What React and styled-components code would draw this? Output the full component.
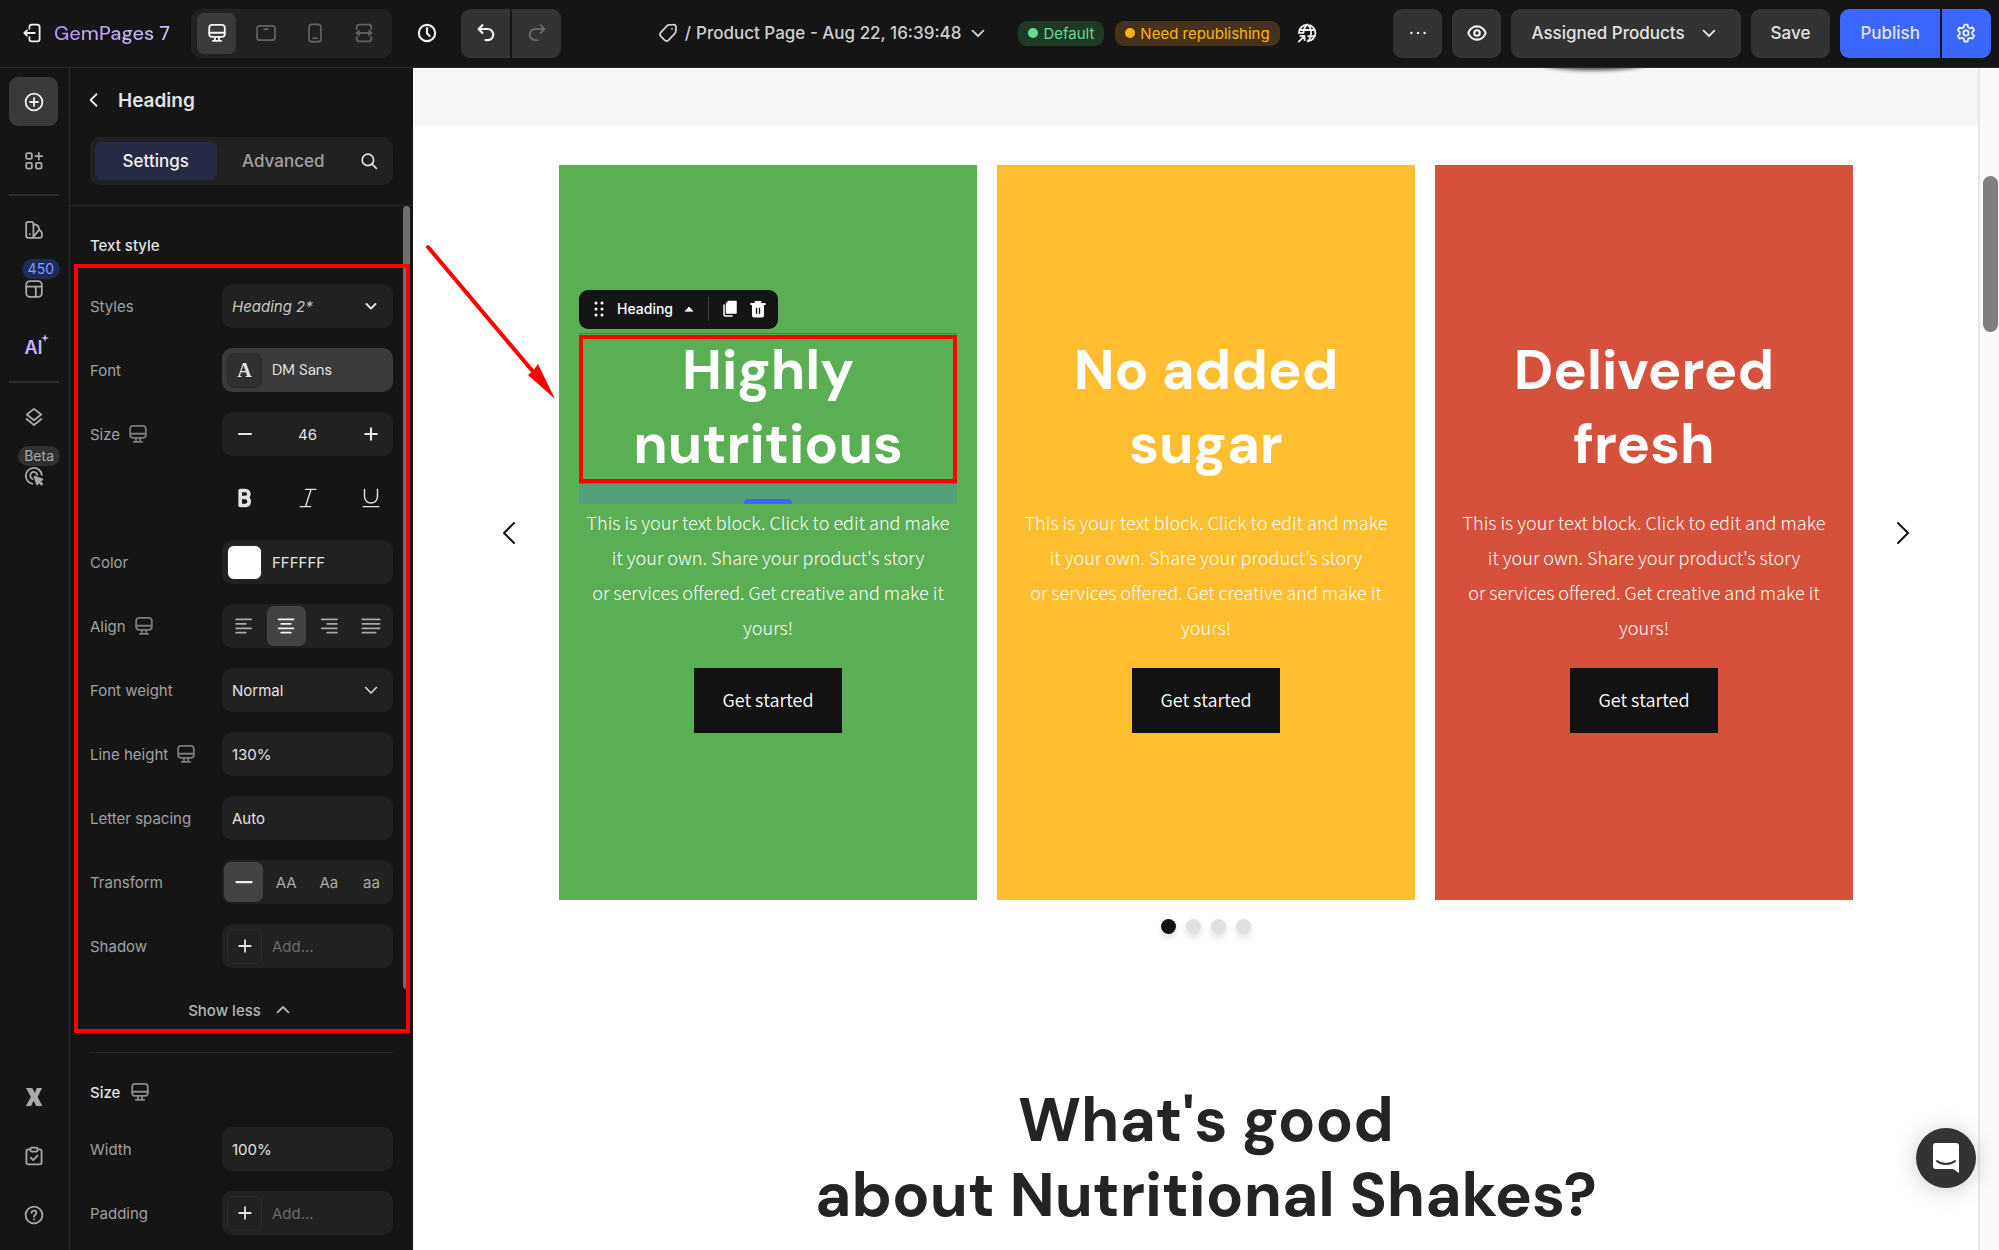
import styled, { createGlobalStyle, css } from 'styled-components';
import { useState } from 'react';

const glyphs = {
  exit: <><path d="M7 6.500V5a2 2 0 0 1 2-2h4.500a2 2 0 0 1 2 2v10a2 2 0 0 1-2 2H9a2 2 0 0 1-2-2v-1.500" /><path d="M11.500 10H2.800M5 7.800 2.800 10 5 12.200" /></>,
  desktop: <><rect x="3.500" y="3.200" width="13" height="10" rx="2.400" /><path d="M3.500 9.800h13M8.300 13.500V16M11.700 13.500V16M6.500 16.500h7" /></>,
  tablet: <><rect x="2.500" y="4" width="15" height="12" rx="2.500" /><path d="M8.500 6.800h3" /></>,
  mobile: <><rect x="5" y="2.800" width="10" height="14.500" rx="2.500" /><path d="M8.500 14.300h3" /></>,
  fluid: <><path d="M4 6.800V5a2 2 0 0 1 2-2h8a2 2 0 0 1 2 2v1.800M4 13.200V15a2 2 0 0 0 2 2h8a2 2 0 0 0 2-2v-1.800" /><path d="M4 10h12M6 8l-2.200 2L6 12M14 8l2.200 2L14 12" /></>,
  clock: <><circle cx="10" cy="10" r="6.800" /><path d="M10 6v4.200l2.200 2.300" /></>,
  undo: <path d="M7 3.500 3.800 6.700 7 9.900M4 6.700h7.500a4.600 4.600 0 0 1 0 9.200H9.500" />,
  redo: <path d="m13 3.500 3.200 3.200L13 9.900M16 6.700H8.500a4.600 4.600 0 0 0 0 9.200h2" />,
  tag: <><path d="M10.600 3.300 14.500 3a2 2 0 0 1 2.200 2.100l-.3 4a2 2 0 0 1-.6 1.200l-5.500 5.800a2 2 0 0 1-2.900 0l-3.500-3.500a2 2 0 0 1 0-2.900l5.400-5.800a2 2 0 0 1 1.300-.6Z" /><path d="M13.300 6.600h.01" /></>,
  down: <path d="m5.500 8 4.500 4.500L14.500 8" />,
  up: <path d="m5.500 12 4.500-4.500 4.500 4.500" />,
  left: <path d="M12 5.200 7.200 10l4.800 4.800" />,
  globe: <><path d="M3.200 9.800a6.900 6.900 0 1 1 7.300 7.100c2-1.600 2.900-4 2.900-7s-1-5.300-3-7c-2.200 1.800-3.200 4-3.300 6.900" /><path d="M3.900 7.500h12.500M3.300 9.900h3M11 12.700h5.300" /><path d="M3.200 17.200 7.800 12.600M4.400 12.400H8V16" /></>,
  dots: <path strokeWidth="2" d="M4.500 10h.01M10 10h.01M15.500 10h.01" />,
  eye: <><path d="M2.800 10c1-3 3.800-5.500 7.200-5.500s6.200 2.500 7.200 5.500c-1 3-3.800 5.500-7.200 5.500S3.800 13 2.800 10Z" /><circle cx="10" cy="10" r="2.300" /></>,
  gear: <><path d="M8.700 3h2.600l.5 2.200 1.500.9 2.200-.7 1.300 2.300-1.600 1.500v1.700l1.600 1.500-1.300 2.300-2.200-.7-1.500.9-.5 2.200H8.700l-.5-2.200-1.500-.9-2.200.7-1.300-2.300 1.600-1.500V9.200L3.200 7.700l1.300-2.300 2.200.7 1.500-.9Z" /><circle cx="10" cy="10" r="2.200" /></>,
  plusCircle: <><circle cx="10" cy="10" r="7" /><path d="M10 6.700v6.600M6.700 10h6.600" /></>,
  apps: <><rect x="3.500" y="3.500" width="4.700" height="4.700" rx="1" /><rect x="3.500" y="11.600" width="4.700" height="4.700" rx="1" /><rect x="11.600" y="11.600" width="4.700" height="4.700" rx="1" /><path d="M14 3.200v5.600M11.200 6h5.600" /></>,
  swatch: <><path d="M3.500 4.800a1.500 1.500 0 0 1 1.500-1.500h3A1.500 1.500 0 0 1 9.500 4.800v10.200a1.500 1.500 0 0 1-1.500 1.500H5A1.500 1.500 0 0 1 3.500 15ZM9.500 5.200c3 .1 4.600 1.800 4.800 4.300M9 16.300l5.400-6.600 1.600 1.700c.5.600.6 1.200.6 1.900v1.700a1.500 1.500 0 0 1-1.500 1.500H8" /><path d="M6.500 13.500h.01" /></>,
  layout: <><rect x="3.500" y="3.500" width="13" height="13" rx="3" /><path d="M3.500 8h13M11.500 8v8.500" /></>,
  layers: <><path d="m10 3.200 6 4.700-6 4.800-6-4.800Z" /><path d="m3.800 11.700 6.200 5 6.200-5" /></>,
  target: <><path d="M8.600 16.500A6.700 6.700 0 1 1 16.500 9M9 12.500a3 3 0 1 1 3.800-3.600" /><path fill="currentColor" d="m10.500 10.500 6.500 2.300-2.500 1.400 2.300 2.300-.6.600-2.400-2.300-1.200 2.300Z" /></>,
  clipboard: <><path d="M7 4.500H5A1.300 1.300 0 0 0 3.700 5.800v9.900A1.300 1.300 0 0 0 5 17h10a1.300 1.300 0 0 0 1.300-1.300V5.800A1.300 1.300 0 0 0 15 4.500h-2" /><rect x="7" y="3" width="6" height="3.300" rx="1.200" /><path d="m7.300 11.400 2 2 3.600-3.800" /></>,
  help: <><circle cx="10" cy="10" r="7" /><path d="M8 8.200C8 5.700 12 5.800 12 8.200c0 1.600-2 1.600-2 3.200M10 13.700h.01" /></>,
  brandX: <path fill="currentColor" stroke="none" d="M3.300 2.500h5.200l2.300 4.200 1.400-4.200h4.500L13 10l4 7.500h-5.200l-2.200-4.300-2 4.300H3.200L7.400 10Zm7.600 6 1.600-4h.6l-1.600 4.200Z" />,
  search: <><circle cx="9" cy="9" r="5.200" /><path d="m13 13 3.700 3.700" /></>,
  minus: <path d="M5 10h10" />,
  plus: <path d="M10 5.200v9.600M5.200 10h9.600" />,
  bold: <path strokeWidth="2.800" d="M6.300 4.200v11.600h4.500a3.200 3.200 0 0 0 0-6.200H6.300M6.300 4.200h4a2.700 2.700 0 0 1 0 5.400" />,
  italic: <path d="M8 2.800h8.500M3.500 17.200H12M12.500 3 8 17" />,
  underline: <path d="M4.600 2.800v6a5.400 5.400 0 0 0 10.800 0v-6M3.500 17.200h13" />,
  alignLeft: <path d="M3.500 4.500h12.500M3.500 8.200h8M3.500 11.900h12.500M3.500 15.600h8" />,
  alignCenter: <path d="M3.800 4.500h12.400M6 8.200h8M3.800 11.900h12.400M6 15.600h8" />,
  alignRight: <path d="M4 4.500h12.500M8.500 8.200h8M4 11.900h12.500M8.500 15.600h8" />,
  justify: <path d="M2.800 4.500h14.400M2.800 8.200h14.400M2.800 11.900h14.400M2.800 15.600h11" />,
  grip: <path strokeWidth="3" d="M7 4h.01M13 4h.01M7 10h.01M13 10h.01M7 16h.01M13 16h.01" />,
  caret: <path fill="currentColor" d="m5.500 12.500 4.500-5 4.500 5Z" />,
  copy: <><path fill="currentColor" d="M8.500 2.500h7.500V14H6.500V4.500Z" /><path d="M4 6v9.500A1.500 1.500 0 0 0 5.500 17H12" /></>,
  trash: <><path strokeWidth="1.800" d="M3 5h14M7.500 5V3h5v2" /><path fill="currentColor" stroke="none" fillRule="evenodd" d="M4 6h12v10.500a2 2 0 0 1-2 2H6a2 2 0 0 1-2-2Zm3.800 2.800v6h1.400v-6Zm3 0v6h1.400v-6Z" /></>,
};

function Icon({ name, size = 24, weight = 1.5 }) {
  return (
    <Svg width={size} height={size} viewBox="0 0 20 20" strokeWidth={weight} aria-hidden="true">
      {glyphs[name]}
    </Svg>
  );
}

const textBlock = [
  'This is your text block. Click to edit and make',
  "it your own. Share your product's story",
  'or services offered. Get creative and make it',
  'yours!',
];

const cards = [
  { title: ['Highly', 'nutritious'], color: '#5aae53', selected: true },
  { title: ['No added', 'sugar'], color: '#ffbe30' },
  { title: ['Delivered', 'fresh'], color: '#d5513b' },
];

function Header() {
  const [device, setDevice] = useState('desktop');
  return (
    <TopBar>
      <TopLeft>
        <PlainButton aria-label="Exit"><Icon name="exit" /></PlainButton>
        <Brand>GemPages 7</Brand>
        <Devices>
          {['desktop', 'tablet', 'mobile', 'fluid'].map((d) => (
            <Device key={d} aria-label={d} $active={d === device} onClick={() => setDevice(d)}>
              <Icon name={d} />
            </Device>
          ))}
        </Devices>
        <PlainButton aria-label="History"><Icon name="clock" weight={1.8} /></PlainButton>
        <Split>
          <BarButton aria-label="Undo" $first><Icon name="undo" weight={1.8} /></BarButton>
          <BarButton aria-label="Redo" $last $muted><Icon name="redo" /></BarButton>
        </Split>
      </TopLeft>
      <PageInfo>
        <PageName>
          <Icon name="tag" />
          <span>/</span>
          <span>Product Page - Aug 22, 16:39:48</span>
          <Icon name="down" size={24} />
        </PageName>
        <Status $bg="#1e3a26" $fg="#64dc92">Default</Status>
        <Status $bg="#453319" $fg="#ffb414">Need republishing</Status>
        <PlainButton aria-label="Language"><Icon name="globe" /></PlainButton>
      </PageInfo>
      <Actions>
        <BarButton aria-label="More"><Icon name="dots" /></BarButton>
        <BarButton aria-label="Preview"><Icon name="eye" weight={1.8} /></BarButton>
        <TextButton>Assigned Products <Icon name="down" size={24} /></TextButton>
        <TextButton>Save</TextButton>
        <Split>
          <TextButton $primary $first>Publish</TextButton>
          <BarButton $primary $last aria-label="Publish settings"><Icon name="gear" /></BarButton>
        </Split>
      </Actions>
    </TopBar>
  );
}

function Sidebar() {
  return (
    <Rail>
      <RailGroup>
        <RailButton $active aria-label="Add element"><Icon name="plusCircle" /></RailButton>
        <RailButton aria-label="Sections"><Icon name="apps" /></RailButton>
      </RailGroup>
      <RailLine />
      <RailGroup>
        <RailButton aria-label="Global style"><Icon name="swatch" /></RailButton>
        <RailButton aria-label="Templates"><Badge $blue>450</Badge><Icon name="layout" /></RailButton>
        <RailButton aria-label="AI">
          <AiMark>AI<svg width="8" height="8" viewBox="0 0 8 8"><path fill="#c9b2ff" d="M4 0 5 3 8 4 5 5 4 8 3 5 0 4 3 3Z" /></svg></AiMark>
        </RailButton>
      </RailGroup>
      <RailLine />
      <RailGroup>
        <RailButton aria-label="Layers"><Icon name="layers" /></RailButton>
        <RailButton aria-label="Interactions"><Badge>Beta</Badge><Icon name="target" /></RailButton>
      </RailGroup>
      <RailFooter>
        <RailButton aria-label="Apps"><Icon name="brandX" /></RailButton>
        <RailButton aria-label="Checklist"><Icon name="clipboard" /></RailButton>
        <RailButton aria-label="Help"><Icon name="help" /></RailButton>
      </RailFooter>
    </Rail>
  );
}

function Field({ label, id, device, children }) {
  return (
    <Row>
      <Label htmlFor={id}>{label}{device && <Icon name="desktop" />}</Label>
      {children}
    </Row>
  );
}

function Panel() {
  const [align, setAlign] = useState('alignCenter');
  const [transform, setTransform] = useState('none');
  return (
    <Side>
      <PanelHead>
        <PanelTitle>
          <PlainButton aria-label="Back"><Icon name="left" /></PlainButton>
          <h1>Heading</h1>
        </PanelTitle>
        <Tabs>
          <Tab $active>Settings</Tab>
          <Tab>Advanced</Tab>
          <SearchButton aria-label="Search"><Icon name="search" size={22} /></SearchButton>
        </Tabs>
      </PanelHead>
      <PanelBody>
        <ScrollThumb />
        <Section>
          <SectionTitle $gap={29}>Text style</SectionTitle>
          <Rows>
            <Field label="Styles" id="styles">
              <SelectBox>
                <Select id="styles" $italic><option>Heading 2*</option></Select>
                <Icon name="down" size={20} weight={2} />
              </SelectBox>
            </Field>
            <Field label="Font" id="font">
              <Control $active>
                <Chip $font>A</Chip>
                <TextInput id="font" defaultValue="DM Sans" $dm />
              </Control>
            </Field>
            <Field label="Size" id="size" device>
              <Control>
                <StepButton aria-label="Decrease"><Icon name="minus" size={24} weight={1.8} /></StepButton>
                <TextInput id="size" defaultValue="46" $center />
                <StepButton aria-label="Increase"><Icon name="plus" size={24} weight={1.8} /></StepButton>
              </Control>
            </Field>
            <FormatRow>
              <StepButton aria-label="Bold"><Icon name="bold" size={26} /></StepButton>
              <StepButton aria-label="Italic"><Icon name="italic" size={24} weight={1.2} /></StepButton>
              <StepButton aria-label="Underline"><Icon name="underline" size={24} weight={1.2} /></StepButton>
            </FormatRow>
            <Field label="Color" id="color">
              <Control>
                <Chip $swatch />
                <TextInput id="color" defaultValue="FFFFFF" />
              </Control>
            </Field>
            <Field label="Align" device>
              <Choices>
                {['alignLeft', 'alignCenter', 'alignRight', 'justify'].map((a) => (
                  <Choice key={a} aria-label={a} $active={a === align} onClick={() => setAlign(a)}>
                    <Icon name={a} size={24} />
                  </Choice>
                ))}
              </Choices>
            </Field>
            <Field label="Font weight" id="weight">
              <SelectBox>
                <Select id="weight"><option>Normal</option></Select>
                <Icon name="down" size={24} weight={1.2} />
              </SelectBox>
            </Field>
            <Field label="Line height" id="line-height" device>
              <Control><TextInput id="line-height" defaultValue="130%" /></Control>
            </Field>
            <Field label="Letter spacing" id="letter-spacing">
              <Control><TextInput id="letter-spacing" defaultValue="Auto" /></Control>
            </Field>
            <Field label="Transform">
              <Choices>
                {['none', 'AA', 'Aa', 'aa'].map((t) => (
                  <Choice key={t} $active={t === transform} onClick={() => setTransform(t)} aria-label={t}>
                    {t === 'none' ? <Icon name="minus" size={30} /> : t}
                  </Choice>
                ))}
              </Choices>
            </Field>
            <Field label="Shadow" id="shadow">
              <Control>
                <Chip><Icon name="plus" size={24} /></Chip>
                <TextInput id="shadow" placeholder="Add..." />
              </Control>
            </Field>
            <ShowLess>Show less <Icon name="up" size={24} /></ShowLess>
          </Rows>
          <PanelMark />
        </Section>
        <Divider />
        <Section>
          <SectionTitle $gap={25}>Size <Icon name="desktop" /></SectionTitle>
          <Rows>
            <Field label="Width" id="width">
              <Control><TextInput id="width" defaultValue="100%" /></Control>
            </Field>
            <Field label="Padding" id="padding">
              <Control>
                <Chip><Icon name="plus" size={24} /></Chip>
                <TextInput id="padding" placeholder="Add..." />
              </Control>
            </Field>
          </Rows>
        </Section>
      </PanelBody>
    </Side>
  );
}

function Canvas() {
  return (
    <Stage>
      <Band><Shade /></Band>
      <Carousel>
        <Arrow aria-label="Previous"><svg width="14" height="24" viewBox="0 0 14 24"><path d="M12 2 2 12l10 10" /></svg></Arrow>
        <Slides>
          {cards.map((card) => (
            <Card key={card.color} $color={card.color}>
              <CardTitle>
                {card.title[0]}<br />{card.title[1]}
                {card.selected && (
                  <>
                    <Selection />
                    <SpacingHandle />
                    <Toolbar>
                      <Icon name="grip" size={20} />
                      <span>Heading</span>
                      <Icon name="caret" size={16} weight={1} />
                      <i />
                      <Icon name="copy" size={20} />
                      <Icon name="trash" size={20} />
                    </Toolbar>
                  </>
                )}
              </CardTitle>
              <CardText>
                {textBlock.map((line) => <span key={line}>{line}</span>)}
              </CardText>
              <CardButton>Get started</CardButton>
            </Card>
          ))}
        </Slides>
        <Arrow aria-label="Next"><svg width="14" height="24" viewBox="0 0 14 24"><path d="m2 2 10 10L2 22" /></svg></Arrow>
      </Carousel>
      <Dots>
        <Dot $active aria-label="Slide 1" />
        <Dot aria-label="Slide 2" />
        <Dot aria-label="Slide 3" />
        <Dot aria-label="Slide 4" />
      </Dots>
      <BigTitle>What's good<br />about Nutritional Shakes?</BigTitle>
      <Track><Thumb /></Track>
      <Pointer width="136" height="160" viewBox="0 0 136 160">
        <path d="M5 5 112 132" stroke="#ff0000" strokeWidth="4" strokeLinecap="round" />
        <path d="m132 157-27-24 5-4 5-7Z" fill="#ff0000" />
      </Pointer>
      <Chat aria-label="Open chat">
        <svg width="28" height="32" viewBox="0 0 28 32">
          <path fill="#fff" d="M4 1h20a3 3 0 0 1 3 3v27l-6-4H4a3 3 0 0 1-3-3V4a3 3 0 0 1 3-3Z" />
          <path d="M5 19c5 4 13 4 18 0" fill="none" stroke="#333" strokeWidth="2" strokeLinecap="round" />
        </svg>
      </Chat>
    </Stage>
  );
}

function App() {
  return (
    <Shell>
      <GlobalStyle />
      <Header />
      <Workspace>
        <Sidebar />
        <Panel />
        <Canvas />
      </Workspace>
    </Shell>
  );
}

const GlobalStyle = createGlobalStyle`
 *{
  box-sizing:border-box;
 }

 body{
  margin:0;
  overflow:hidden;
 }

 button,input,select{
  font:inherit;
  color:inherit;
  border:none;
  background:none;
  padding:0;
  margin:0;
 }

 button{
  cursor:pointer;
 }
`;

const Svg = styled.svg`
 flex:none;
 fill:none;
 stroke:currentColor;
 stroke-linecap:round;
 stroke-linejoin:round;
`;

const Shell = styled.div`
 height:100vh;
 display:flex;
 flex-direction:column;
 background:#151515;
 color:#e3e3e3;
 font-family:Inter,"Liberation Sans",sans-serif;
 font-size:15px;
`;

const TopBar = styled.header`
 flex:none;
 height:68px;
 display:flex;
 align-items:center;
 justify-content:space-between;
 padding:0 8px 1px 21px;
 border-bottom:1px solid #2a2a2a;
`;

const TopLeft = styled.div`
 display:flex;
 align-items:center;
 padding-right:20px;
`;

const PlainButton = styled.button`
 display:flex;
 color:#f1f1f1;
`;

const Brand = styled.div`
 flex:none;
 width:146px;
 padding-left:9px;
 font-family:"DM Sans",Inter,sans-serif;
 font-size:20px;
 font-weight:500;
 white-space:nowrap;
 background:linear-gradient(90deg,#b48af0,#cfcaff);
 background-clip:text;
 color:transparent;
`;

const Devices = styled.div`
 display:flex;
 gap:10px;
 padding:4px 9px 4px 6px;
 margin-right:23px;
 border-radius:10px;
 background:#212121;
`;

const Device = styled.button`
 width:39px;
 height:41px;
 display:grid;
 place-items:center;
 border-radius:7px;
 color:${(p) => (p.$active ? '#f5f5f5' : '#616161')};
 background:${(p) => (p.$active ? '#3a3a3a' : 'none')};
`;

const Split = styled.div`
 display:flex;
 gap:2px;

 ${TopLeft} &{
  margin-left:22px;
 }
`;

const corner = css`
 border-radius:${(p) => (p.$first ? '9px 0 0 9px' : p.$last ? '0 9px 9px 0' : '9px')};
`;

const BarButton = styled.button`
 width:49px;
 height:49px;
 display:grid;
 place-items:center;
 ${corner}
 color:${(p) => (p.$muted ? '#6d6d6d' : '#f1f1f1')};
 background:${(p) => (p.$primary ? '#3c67ff' : '#333333')};
`;

const TextButton = styled.button`
 height:49px;
 display:flex;
 align-items:center;
 gap:12px;
 padding:0 20px;
 ${corner}
 font-size:17px;
 font-weight:500;
 white-space:nowrap;
 background:${(p) => (p.$primary ? '#3c67ff' : '#333333')};
`;

const PageInfo = styled.div`
 display:flex;
 align-items:center;
 gap:11px;
`;

const PageName = styled.div`
 display:flex;
 align-items:center;
 gap:5px;
 margin-right:17px;
 font-size:17px;
 font-weight:500;
 white-space:nowrap;
 color:#cfcfcf;
`;

const Status = styled.div`
 height:25px;
 display:flex;
 align-items:center;
 gap:5px;
 padding:0 10px;
 border-radius:9px;
 white-space:nowrap;
 color:${(p) => p.$fg};
 background:${(p) => p.$bg};

 &:before{
  content:"";
  width:10px;
  height:10px;
  border-radius:50%;
  background:${(p) => p.$fg};
 }

 & + ${PlainButton}{
  margin-left:4px;
 }
`;

const Actions = styled.div`
 display:flex;
 gap:10px;
`;

const Workspace = styled.div`
 flex:1;
 min-height:0;
 display:flex;
`;

const Rail = styled.nav`
 flex:none;
 width:70px;
 display:flex;
 flex-direction:column;
 padding:9px 10px 9px 9px;
 border-right:1px solid #2d2d2d;
 color:#a9a9a9;
`;

const RailGroup = styled.div`
 display:grid;
 gap:10px;
`;

const RailButton = styled.button`
 position:relative;
 width:49px;
 height:49px;
 display:grid;
 place-items:center;
 border-radius:9px;
 color:${(p) => (p.$active ? '#f1f1f1' : 'inherit')};
 background:${(p) => (p.$active ? '#3a3a3a' : 'none')};
`;

const RailLine = styled.hr`
 width:100%;
 height:2px;
 margin:9px 0;
 border:none;
 background:#2d2d2d;
`;

const RailFooter = styled(RailGroup)`
 margin-top:auto;
 padding-bottom:2px;
`;

const Badge = styled.span`
 position:absolute;
 top:-5px;
 right:-2px;
 padding:0 6px;
 border-radius:10px;
 font-size:14px;
 line-height:20px;
 color:${(p) => (p.$blue ? '#7f9bff' : '#a9a9a9')};
 background:${(p) => (p.$blue ? '#1f2a55' : '#303030')};
`;

const AiMark = styled.span`
 position:relative;
 font-size:18px;
 font-weight:600;
 color:#cdb5ff;

 svg{
  position:absolute;
  top:-3px;
  right:-6px;
 }
`;

const Side = styled.aside`
 flex:none;
 width:343px;
 display:flex;
 flex-direction:column;
`;

const PanelHead = styled.div`
 padding:16px 20px 20px;
 border-bottom:1px solid #2a2a2a;
`;

const PanelTitle = styled.div`
 height:32px;
 display:flex;
 align-items:center;
 gap:12px;
 margin-left:-8px;

 h1{
  margin:0;
  font-size:19px;
  font-weight:600;
 }
`;

const Tabs = styled.div`
 display:flex;
 gap:6px;
 margin-top:21px;
 padding:5px;
 border-radius:10px;
 background:#212121;
`;

const Tab = styled.button`
 flex:1;
 height:38px;
 border-radius:7px;
 font-size:17px;
 font-weight:500;
 color:${(p) => (p.$active ? '#f1f1f1' : '#a0a0a0')};
 background:${(p) => (p.$active ? '#262a44' : 'none')};
`;

const SearchButton = styled.button`
 width:38px;
 display:grid;
 place-items:center;
`;

const PanelBody = styled.div`
 position:relative;
 flex:1;
 min-height:0;
 overflow:hidden;
`;

const ScrollThumb = styled.div`
 position:absolute;
 top:0;
 right:3px;
 width:7px;
 height:75%;
 border-radius:4px;
 background:#6e6e6e;
`;

const Section = styled.section`
 position:relative;
 padding:29px 20px 0;
`;

const SectionTitle = styled.h2`
 height:20px;
 display:flex;
 align-items:center;
 gap:8px;
 margin:0 0 ${(p) => p.$gap}px;
 font-size:15px;
 font-weight:500;

 svg{
  color:#8a8a8a;
 }
`;

const Rows = styled.div`
 display:grid;
 gap:20px;
`;

const Row = styled.div`
 display:grid;
 grid-template-columns:132px 1fr;
 align-items:center;
 height:44px;
`;

const Label = styled.label`
 display:flex;
 align-items:center;
 gap:6px;
 white-space:nowrap;
 color:#a0a0a0;

 svg{
  color:#7a7a7a;
 }
`;

const Control = styled.div`
 height:44px;
 min-width:0;
 display:flex;
 align-items:center;
 padding:0 5px;
 border-radius:10px;
 background:${(p) => (p.$active ? '#3b3b3b' : '#212121')};
`;

const TextInput = styled.input`
 flex:1;
 width:100%;
 min-width:0;
 padding:0 5px;
 outline:none;
 text-align:${(p) => (p.$center ? 'center' : 'left')};
 ${(p) => p.$dm && 'font-family:"DM Sans",Inter,sans-serif;'}

 &::placeholder{
  color:#6a6a6a;
 }
`;

const Chip = styled.div`
 flex:none;
 width:35px;
 height:35px;
 margin-right:5px;
 display:grid;
 place-items:center;
 border:1px solid #2b2b2b;
 border-radius:7px;
 background:${(p) => (p.$swatch ? '#ffffff' : p.$font ? '#303030' : 'none')};
 font-family:"Liberation Serif",serif;
 font-size:20px;
 font-weight:700;
`;

const StepButton = styled.button`
 width:35px;
 height:35px;
 display:grid;
 place-items:center;
`;

const FormatRow = styled.div`
 height:44px;
 display:flex;
 align-items:center;
 justify-content:space-between;
 margin-left:132px;
 padding:0 5px;
`;

const SelectBox = styled.div`
 height:44px;
 display:grid;
 grid-template-columns:1fr 44px;
 align-items:center;
 justify-items:center;
 border-radius:10px;
 background:#212121;

 svg{
  grid-area:1 / 2;
  pointer-events:none;
 }
`;

const Select = styled.select`
 grid-area:1 / 1 / 2 / 3;
 width:100%;
 height:100%;
 padding:0 10px;
 appearance:none;
 font-style:${(p) => (p.$italic ? 'italic' : 'normal')};
 color:${(p) => (p.$italic ? '#c4c4c4' : 'inherit')};
`;

const Choices = styled.div`
 height:44px;
 display:grid;
 grid-template-columns:repeat(4,39px);
 justify-content:space-between;
 align-items:center;
 padding:0 2px;
 border-radius:10px;
 background:#212121;
`;

const Choice = styled.button`
 height:40px;
 display:grid;
 place-items:center;
 border-radius:7px;
 color:${(p) => (p.$active ? '#f1f1f1' : '#a9a9a9')};
 background:${(p) => (p.$active ? '#434343' : 'none')};
`;

const ShowLess = styled.button`
 height:44px;
 display:flex;
 align-items:center;
 justify-content:center;
 gap:10px;
 font-weight:500;
 color:#b5b5b5;
`;

const PanelMark = styled.div`
 position:absolute;
 inset:58px 3px -1px 4px;
 border:4px solid #ff0000;
 pointer-events:none;
`;

const Divider = styled.hr`
 height:1px;
 margin:20px 20px 0;
 border:none;
 background:#2a2a2a;
`;

const Stage = styled.main`
 position:relative;
 flex:1;
 min-width:0;
 overflow:hidden;
 background:#ffffff;
 color:#121212;
`;

const Band = styled.div`
 height:57px;
 overflow:hidden;
 background:#f5f6f8;
`;

/* lower edge of the product photo above the carousel */
const Shade = styled.div`
 width:110px;
 height:16px;
 margin:-14px 0 0 71%;
 border-radius:50%;
 background:#3c3a38;
 filter:blur(2px);
`;

const Carousel = styled.div`
 display:flex;
 align-items:center;
 justify-content:center;
 gap:43px;
 padding-top:40px;
`;

const Arrow = styled.button`
 display:flex;

 path{
  fill:none;
  stroke:#121212;
  stroke-width:2;
  stroke-linecap:round;
  stroke-linejoin:round;
 }
`;

const Slides = styled.div`
 width:82%;
 max-width:1294px;
 display:grid;
 grid-template-columns:repeat(3,minmax(0,1fr));
 gap:20px;
`;

const Card = styled.article`
 min-height:735px;
 display:flex;
 flex-direction:column;
 align-items:center;
 justify-content:center;
 padding:20px;
 color:#ffffff;
 background:${(p) => p.$color};
`;

const CardTitle = styled.h2`
 position:relative;
 width:100%;
 margin:0 0 25px;
 font-family:"DM Sans","Open Sans",sans-serif;
 font-size:56px;
 font-weight:700;
 line-height:74px;
 text-align:center;
`;

const Selection = styled.div`
 position:absolute;
 inset:2px 0 -2px;
 border:4px solid #ff0000;

 &:before{
  content:"";
  position:absolute;
  inset:-6px -4px -5px;
  border:solid #3c67ff;
  border-width:1px 0;
 }
`;

const SpacingHandle = styled.div`
 position:absolute;
 bottom:-23px;
 left:0;
 right:0;
 height:20px;
 background:#539f7a;

 &:after{
  content:"";
  position:absolute;
  bottom:0;
  left:50%;
  width:48px;
  height:5px;
  margin-left:-24px;
  border-radius:4px 4px 0 0;
  background:#3c67ff;
 }
`;

const Toolbar = styled.div`
 position:absolute;
 bottom:100%;
 left:0;
 height:39px;
 display:flex;
 align-items:center;
 gap:8px;
 margin-bottom:4px;
 padding:0 10px;
 border-radius:9px;
 background:#151515;
 font-family:Inter,sans-serif;
 font-size:14px;
 font-weight:500;
 line-height:20px;

 i{
  width:1px;
  height:24px;
  margin:0 3px;
  background:#3f3f3f;
 }
`;

const CardText = styled.p`
 display:grid;
 margin:0 0 22px;
 font-family:Assistant,"Source Sans 3","Source Sans Pro","Noto Sans CJK SC",sans-serif;
 font-size:20px;
 font-weight:300;
 line-height:35px;
 text-align:center;
 white-space:nowrap;
`;

const CardButton = styled.button`
 width:148px;
 height:65px;
 font-family:Assistant,"Source Sans 3","Source Sans Pro","Noto Sans CJK SC",sans-serif;
 font-size:20px;
 background:#121212;
`;

const Dots = styled.div`
 display:flex;
 justify-content:center;
 gap:10px;
 margin-top:19px;
`;

const Dot = styled.button`
 width:15px;
 height:15px;
 border-radius:50%;
 background:${(p) => (p.$active ? '#121212' : '#e0e0e0')};
 box-shadow:0 4px 6px rgba(0,0,0,0.12);
`;

const BigTitle = styled.h2`
 margin:148px 0 0;
 font-family:"DM Sans","Open Sans",sans-serif;
 font-size:62px;
 font-weight:700;
 line-height:75px;
 text-align:center;
 color:#242424;
`;

const Track = styled.div`
 position:absolute;
 top:0;
 right:0;
 bottom:0;
 width:21px;
 padding:108px 1px 0 3px;
 border-left:2px solid #e8e8e8;
 background:#fafafa;
`;

const Thumb = styled.div`
 height:156px;
 border-radius:8px;
 background:#7f7f7f;
`;

const Pointer = styled.svg`
 position:absolute;
 top:174px;
 left:10px;
 fill:none;
`;

const Chat = styled.button`
 position:absolute;
 right:23px;
 bottom:62px;
 width:60px;
 height:60px;
 display:grid;
 place-items:center;
 border-radius:50%;
 background:#333333;
 box-shadow:0 2px 24px rgba(0,0,0,0.2);
`;

export default App;
